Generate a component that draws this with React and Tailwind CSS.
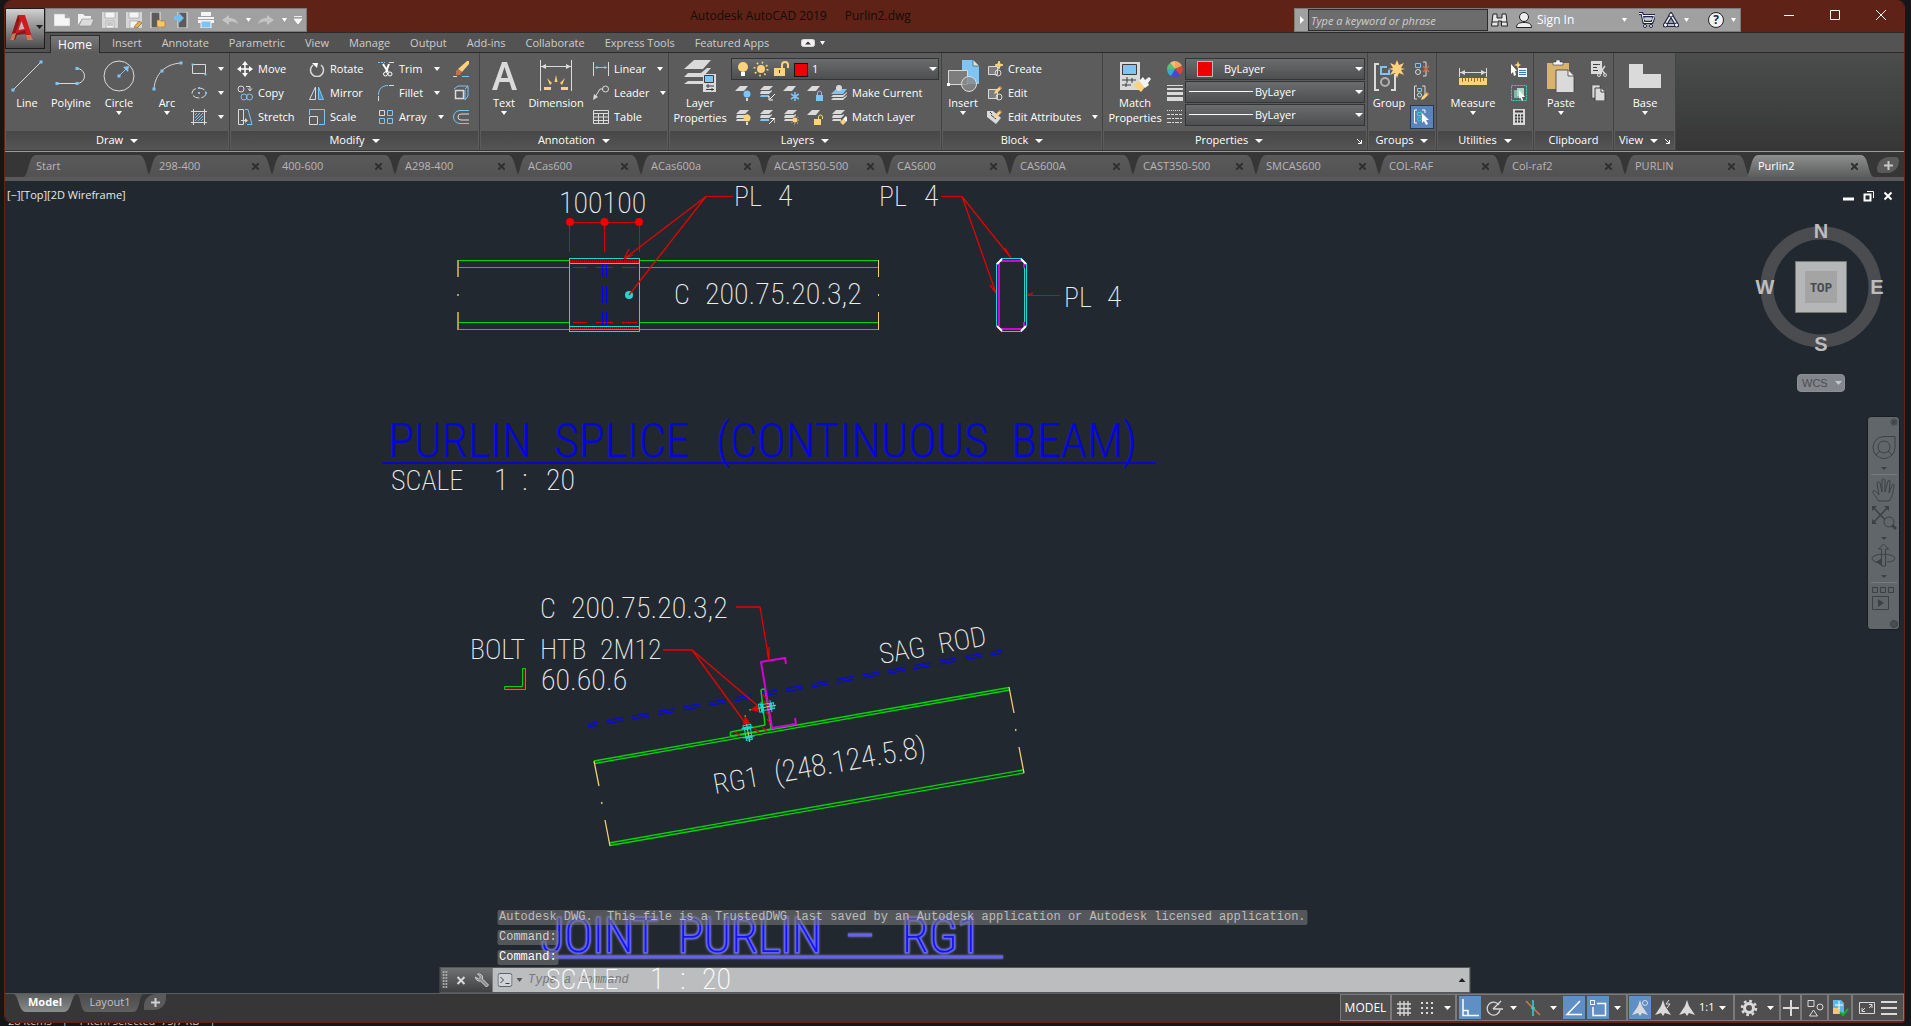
import React from 'react'

const G = '#dadada'
const B = '#7ec4f4'
const Y = '#fcd27a'
const D = '#3c3c3c'

const Svg = ({ w = 16, h, children, className = '' }) => (
  <svg
    width={w}
    height={h || w}
    viewBox={`0 0 ${w} ${h || w}`}
    fill="none"
    stroke={G}
    className={`shrink-0 ${className}`}
    aria-hidden="true"
  >
    {children}
  </svg>
)

const Caret = ({ w = 7, color = '#ffffff', className = '' }) => (
  <svg width={w} height="4" viewBox="0 0 8 4" preserveAspectRatio="none" className={`shrink-0 ${className}`} aria-hidden="true">
    <path d="M0 0h8l-4 4z" fill={color} />
  </svg>
)

const Dots = ({ pts, s = 3, fill = B }) =>
  pts.map(([x, y]) => <rect key={`${x}-${y}`} x={x - s / 2} y={y - s / 2} width={s} height={s} fill={fill} stroke="none" />)

/* ---------- Quick access icons ---------- */
const quickIcons = [
  { name: 'New', icon: <path d="M0 2h11l5 4v8H0zM11 2v4h5" fill="#f6f6f6" stroke="#b8b8b8" strokeWidth=".6" /> },
  {
    name: 'Open',
    icon: (
      <>
        <path d="M0 13V2h5l2 2h6v3H4z" fill="#f2f2f2" stroke="none" />
        <path d="M4 7h12l-3 7H1z" fill="#dcdcdc" stroke="#8a8a8a" strokeWidth=".6" />
      </>
    ),
  },
  {
    name: 'Save',
    icon: (
      <>
        <path d="M0 0h16v16H0z" fill="#d6d6d6" stroke="none" />
        <path d="M3 0h10v6H3zM4 9h8v7H4z" fill="#f4f4f4" stroke="#999" strokeWidth=".6" />
        <path d="M5 11h6M5 13h6" stroke="#999" />
      </>
    ),
  },
  {
    name: 'Save As',
    icon: (
      <>
        <path d="M0 0h16v16H0z" fill="#d6d6d6" stroke="none" />
        <path d="M3 0h10v6H3zM4 9h8v7H4z" fill="#f4f4f4" stroke="#999" strokeWidth=".6" />
        <path d="M8 15l5-6 3 2-5 5z" fill="#e8b24a" stroke="#7a5520" strokeWidth=".6" />
      </>
    ),
  },
  {
    name: 'Open from Web',
    icon: (
      <>
        <path d="M1 0h9v16H1z" fill="#5b5b5b" stroke="#e8e8e8" />
        <path d="M7 15V8h3l1 1h4v6z" fill="#f5c766" stroke="#9a7430" strokeWidth=".6" />
      </>
    ),
  },
  {
    name: 'Save to Web',
    icon: (
      <>
        <path d="M4 0h9v16H4z" fill="#5b5b5b" stroke="#e8e8e8" />
        <path d="M0 4h5V1l5 5-5 5V8H0z" fill="#6fc0f5" stroke="none" />
      </>
    ),
  },
  {
    name: 'Plot',
    icon: (
      <>
        <path d="M3 0h10v4H3zM0 5h16v6H0z" fill="#f4f4f4" stroke="none" />
        <path d="M3 9h10v7H3z" fill="#7ec4f4" stroke="#f4f4f4" />
        <path d="M0 7.500h16" stroke="#a0a0a0" />
      </>
    ),
  },
]

/* ---------- Ribbon icons ---------- */
const bigIcons = {
  line: (
    <Svg w={32}>
      <path d="M2 30L30 2" />
      <Dots pts={[[2, 30], [30, 2]]} />
    </Svg>
  ),
  polyline: (
    <Svg w={32}>
      <path d="M2 23.500H22a7.500 7.500 0 0 0 0-15" />
      <Dots pts={[[2, 23.5], [22, 23.5], [22, 8.5]]} />
    </Svg>
  ),
  circle: (
    <Svg w={32}>
      <circle cx="16" cy="16" r="15" />
      <path d="M16 16l7-7" stroke={B} />
      <path d="M20 7l6-1-1 6z" fill={B} stroke="none" />
      <Dots pts={[[16, 16]]} />
    </Svg>
  ),
  arc: (
    <Svg w={32}>
      <path d="M3 29C4 14 14 4 30 3" />
      <Dots pts={[[3, 29], [11, 11], [30, 3]]} />
    </Svg>
  ),
  text: (
    <Svg w={32}>
      <path fillRule="evenodd" d="M4 30L14 2h5l10 28h-5l-2.500-8h-10L9 30zM13 18h7L16.500 7z" fill={G} stroke="none" />
    </Svg>
  ),
  dimension: (
    <Svg w={32}>
      <path d="M.5 0v31M31.500 0v31M1 6.500h30" />
      <path d="M1 6.500l5-2.500v5zM31 6.500l-5-2.500v5z" fill={G} stroke="none" />
      <path d="M16 15l1.500 7h-3zM7 18l5 5-2 2zM25 18l-5 5 2 2zM4 27h7v3H4zM21 27h7v3h-7z" fill={Y} stroke="none" />
    </Svg>
  ),
  layers: (
    <Svg w={32}>
      <path d="M10 0h17l-8 9H0zM4 13l-4 4h19l8-9h-4l-6 5zM4 21l-4 3h19v-3z" fill={G} stroke="none" />
      <path d="M19 14h13v18H19z" fill={G} stroke="none" />
      <path d="M20.500 15.500h9v7h-9z" fill={B} stroke={D} />
      <path d="M22 26h8M22 29.500h8M24 24v4M28 28v3" stroke={D} />
    </Svg>
  ),
  insert: (
    <Svg w={32}>
      <path d="M15 0h11l6 6v18H15z" fill={B} stroke="none" />
      <path d="M26 0v6h6" fill="#cfeadb" stroke={D} strokeWidth=".6" />
      <path d="M1.500 10.500h19v14h-19z" fill="#7d7d7d" />
      <circle cx="22" cy="24" r="7.500" fill="#8a8a8a" fillOpacity=".8" />
      <Dots pts={[[1.5, 24.5]]} fill="#ffffff" />
    </Svg>
  ),
  match: (
    <Svg w={32}>
      <path d="M1 2h20v28H1z" fill={G} stroke="none" />
      <path d="M3.500 4.500h14v10h-14z" fill={B} stroke={D} />
      <path d="M3 20h14M3 25h9M8 17v6M13 18v5M7 23v4" stroke={D} />
      <path d="M14 25l6-4 6 6-4 5z" fill={Y} stroke="none" />
      <path d="M20 21l4-4 2 3 4-3 2 2-3 4 1 2-4 3z" fill="#f3f3f3" stroke="none" />
    </Svg>
  ),
  group: (
    <Svg w={32}>
      <path d="M6 4H2v26h4M18 30h4V14" strokeWidth="2" />
      <path d="M14 7H8v7h8v-4" stroke={B} strokeWidth="2" />
      <circle cx="12" cy="22" r="4" strokeWidth="2" stroke="#b0b0b0" />
      <path d="M24 0l2 5 5-2-3 5 4 1-4 1 3 5-5-2-2 5-2-5-5 2 3-5-5-1 5-1-3-5 5 2z" fill={Y} stroke="none" />
    </Svg>
  ),
  measure: (
    <Svg w={32}>
      <path d="M2.500 8v9M29.500 8v9M3 12.500h26" />
      <path d="M3 12.500l5-2.500v5zM29 12.500l-5-2.500v5z" fill={G} stroke="none" />
      <path d="M2 18h28v7H2z" fill={Y} stroke="none" />
      <path d="M5.500 18v4M8.500 18v3M11.500 18v4M14.500 18v3M17.500 18v4M20.500 18v3M23.500 18v4M26.500 18v3" stroke="#9c6f20" />
    </Svg>
  ),
  paste: (
    <Svg w={32}>
      <path d="M2 3h22v26H2z" fill="#d9b26c" stroke="none" />
      <path d="M8 5V2h3V0h4v2h3v3z" fill="#f5f5f5" stroke={D} strokeWidth=".6" />
      <path d="M11 10h12l6 6v17H11z" fill={G} stroke={D} strokeWidth=".8" />
      <path d="M23 10v6h6" fill="#f5f5f5" stroke={D} strokeWidth=".8" />
    </Svg>
  ),
  base: (
    <Svg w={32}>
      <path d="M0 4h14v10h18v14H0z" fill={G} stroke="none" />
    </Svg>
  ),
}

const Pencil = ({ x = 0, y = 0 }) => (
  <g transform={`translate(${x} ${y})`} stroke="none">
    <path d="M0 8l1-3 5-5 2 2-5 5z" fill={Y} />
    <path d="M5 1l1-1 2 2-1 1z" fill="#c4704a" />
  </g>
)

const Sheets = ({ blue }) => (
  <g stroke="none" fill={G}>
    <path d="M5 1h9l-4 4H1z" />
    <path d="M2 6h9l2-1v1l-3 3H1z" />
    <path d="M2 10h8v2H1z" fill={blue ? B : G} />
  </g>
)

const Sheet = () => <path d="M5 1h8L9 6H0z" fill={G} stroke="none" />

const smallIcons = {
  rect: (
    <Svg>
      <path d="M1.500 3.500h13v9h-13z" />
      <Dots pts={[[1.5, 3.5], [14.5, 13.5]]} s={2} />
    </Svg>
  ),
  ellipse: (
    <Svg>
      <ellipse cx="8" cy="8" rx="7" ry="5" strokeDasharray="7 2" />
      <Dots pts={[[8, 8], [8, 3], [15, 8]]} s={2} />
    </Svg>
  ),
  hatch: (
    <Svg>
      <path d="M0 2.500h16M0 13.500h16M2.500 0v16M13.500 0v16" />
      <path d="M4 9l5-5M4 12l8-8M7 12l5-5M10 12l2-2M4 6l2-2" stroke={B} />
    </Svg>
  ),
  move: (
    <Svg>
      <path d="M8 2v12M2 8h12" stroke="#fff" strokeWidth="1.500" />
      <path d="M8 0l3 4H5zM8 16l3-4H5zM0 8l4-3v6zM16 8l-4-3v6z" fill="#fff" stroke="none" />
    </Svg>
  ),
  copy: (
    <Svg>
      <circle cx="4" cy="4" r="3" />
      <path d="M9 1.500h4V5M11 3.500l2 2.500 2-2.500" />
      <circle cx="7" cy="12" r="3" stroke={B} />
      <circle cx="12.500" cy="12" r="3" stroke={B} />
    </Svg>
  ),
  stretch: (
    <Svg>
      <path d="M1.500.5h5v15h-5zM4 11.500h5" />
      <path d="M8 9l3 2.500L8 14z" fill={G} stroke="none" />
      <path d="M8 .5h3l4 15h-5" stroke={B} />
    </Svg>
  ),
  rotate: (
    <Svg>
      <path d="M4 4a6.500 6.500 0 1 0 8 0" strokeWidth="1.500" />
      <path d="M3 2h6L8 7z" fill="#fff" stroke="none" />
    </Svg>
  ),
  mirror: (
    <Svg>
      <path d="M6.500 2v12.500h-6z" />
      <path d="M9.500 2v12.500h5z" fill="#4a8dc0" stroke={B} />
    </Svg>
  ),
  scale: (
    <Svg>
      <path d="M.5 6V.5h15v15H10" stroke={B} />
      <path d="M.5 7.500h8v8h-8z" />
    </Svg>
  ),
  trim: (
    <Svg>
      <path d="M0 1.500h7" stroke={B} strokeDasharray="2 1" />
      <path d="M11 1.500h5" />
      <path d="M5 3l5 8M11 3l-3 8" stroke="#fff" strokeWidth="2" />
      <circle cx="7.500" cy="13" r="2" stroke="#fff" />
      <circle cx="12" cy="13" r="2" stroke="#fff" />
    </Svg>
  ),
  fillet: (
    <Svg>
      <path d="M.5 10C.5 4 4 .5 10 .5" stroke={B} />
      <path d="M11 .5h5M.5 11v5" />
    </Svg>
  ),
  array: (
    <Svg>
      <path d="M1.500 1.500h5v5h-5z" />
      <path d="M9.500 1.500h5v5h-5zM1.500 9.500h5v5h-5zM9.500 9.500h5v5h-5z" stroke={B} />
    </Svg>
  ),
  erase: (
    <Svg>
      <path d="M5 8l9-8h2v3l-7 8z" fill={Y} stroke="none" />
      <path d="M3 10l2-2 4 3-2 3H3z" fill="#c4704a" stroke="none" />
      <path d="M0 15.500h4" />
      <path d="M9 15.500h7" stroke={B} />
    </Svg>
  ),
  explode: (
    <Svg>
      <path d="M2.500 5.500h8v8h-8z" strokeWidth="1.500" />
      <path d="M1 4l4-3h10l-3 3M15 1v10l-3 4V5" stroke={B} />
    </Svg>
  ),
  offset: (
    <Svg>
      <path d="M16 1.500H7a6.500 6.500 0 0 0 0 13h9" stroke={B} />
      <path d="M16 5H8a3 3 0 0 0 0 6h8" />
    </Svg>
  ),
  linear: (
    <Svg>
      <path d="M.5 1v14M15.500 1v14" />
      <path d="M2 6.500h12M4 5v3M12 5v3" stroke={B} />
    </Svg>
  ),
  leader: (
    <Svg>
      <circle cx="12.500" cy="4" r="3" />
      <path d="M10 4H7l-5 8" />
      <path d="M0 15l1-6 4 3z" fill={G} stroke="none" />
    </Svg>
  ),
  table: (
    <Svg>
      <path d="M.5 1.500h15v13H.5zM.5 4.500h15M.5 8h15M.5 11.500h15M5.500 4v10M10.500 4v10" />
    </Svg>
  ),
  layerOff: <Svg><Sheet /><circle cx="12" cy="9" r="3.500" fill={B} stroke="none" /><path d="M12 13v3" strokeWidth="2" /></Svg>,
  layerIso: <Svg><Sheets blue /><path d="M16 9l-5 5M10 11v4h4" stroke="#fff" /></Svg>,
  layerFreeze: <Svg><Sheet /><path d="M12 7v9M8 9l8 5M16 9l-8 5" stroke={B} strokeWidth="1.500" /></Svg>,
  layerLock: <Svg><Sheet /><path d="M9 10h7v6H9z" fill={B} stroke="none" /><path d="M10.500 10V8a2 2 0 0 1 4 0v2" stroke={B} /></Svg>,
  makeCurrent: (
    <Svg>
      <path d="M5 4h11l-4 5H0z" fill={B} stroke="none" />
      <path d="M2 10h10l4-3v1l-4 4H0zM2 13h10l4-3v1l-4 4H0z" fill={G} stroke="none" />
      <circle cx="8" cy="3" r="3" fill={G} stroke="none" />
    </Svg>
  ),
  layerOn: <Svg><Sheets /><circle cx="12" cy="9" r="3.500" fill={Y} stroke="none" /><path d="M12 13v3" strokeWidth="2" /></Svg>,
  layerUniso: <Svg><Sheets blue /><path d="M10 15l5-5M11.500 9.500H16V14" stroke="#fff" /></Svg>,
  layerThaw: <Svg><Sheets /><circle cx="12" cy="11" r="2.500" fill={Y} stroke="none" /><circle cx="12" cy="11" r="4" stroke={Y} strokeDasharray="1 2" /></Svg>,
  layerUnlock: <Svg><Sheet /><path d="M7 10h7v6H7z" fill={Y} stroke="none" /><path d="M11.500 10V8a2 2 0 0 1 4 0v2" stroke={Y} /></Svg>,
  matchLayer: <Svg><Sheets /><path d="M9 13l3-3 3 3-3 3z" fill={Y} stroke="none" /><path d="M12 10l3-3 2 3-2 3z" fill="#fff" stroke="none" /></Svg>,
  create: (
    <Svg>
      <path d="M1.500 5.500h9v8h-9z" fill="#7d7d7d" />
      <circle cx="11" cy="12" r="3" />
      <path d="M12 0l1 3 3 1-3 1-1 3-1-3-3-1 3-1z" fill={Y} stroke={Y} />
    </Svg>
  ),
  edit: (
    <Svg>
      <path d="M1.500 4.500h9v9h-9z" fill="#7d7d7d" />
      <circle cx="12" cy="12" r="3" />
      <Pencil x={7} y={1} />
    </Svg>
  ),
  attributes: (
    <Svg>
      <path d="M0 2h6l8 7-5 6-9-7z" fill={G} stroke="none" />
      <path d="M4 6l5 4M3 3l2 2" stroke={D} />
      <Pencil x={7} y={1} />
    </Svg>
  ),
  wheel: (
    <Svg>
      <path d="M8 8L3 2a8 8 0 0 1 5-2z" fill="#f0c070" stroke="none" />
      <path d="M8 8V0a8 8 0 0 1 7 5z" fill="#e8a860" stroke="none" />
      <path d="M8 8l7-3a8 8 0 0 1-2 9z" fill="#d84838" stroke="none" />
      <path d="M8 8l5 6a8 8 0 0 1-9 1z" fill="#4848d8" stroke="none" />
      <path d="M8 8l-4 7a8 8 0 0 1-4-7z" fill="#38a8d8" stroke="none" />
      <path d="M8 8H0a8 8 0 0 1 3-6z" fill="#58c070" stroke="none" />
    </Svg>
  ),
  weight: (
    <Svg>
      <path d="M0 .5h16" />
      <path d="M0 4h16" strokeWidth="2" />
      <path d="M0 8.500h16" strokeWidth="3" />
      <path d="M0 14h16" strokeWidth="4" />
    </Svg>
  ),
  linetype: (
    <Svg>
      <path d="M0 1.500h16" strokeDasharray="1 1" />
      <path d="M0 5.500h16" strokeDasharray="3 1" />
      <path d="M0 9.500h16M0 13.500h16" strokeDasharray="4 1 2 1" />
    </Svg>
  ),
  ungroup: (
    <Svg>
      <path d="M1.500 2.500h5v4h-5z" stroke={B} />
      <circle cx="4" cy="11" r="2.500" />
      <path d="M9 1h3v14H9" />
      <path d="M9 5l6 6M15 5l-6 6" stroke="#d06a48" strokeWidth="1.500" />
    </Svg>
  ),
  groupEdit: (
    <Svg>
      <path d="M3 1H.5v13H3M8 1h3v9" />
      <path d="M3.500 3.500h4v3h-4z" stroke={B} />
      <circle cx="5.500" cy="10" r="2" />
      <Pencil x={7} y={7} />
    </Svg>
  ),
  groupSelect: (
    <Svg>
      <path d="M3 1H.5v13H3M8 1h3v3" stroke="#fff" />
      <path d="M3.500 3.500h4v3h-4z" stroke="#28d8c0" />
      <circle cx="5.500" cy="10" r="2" stroke="#28d8c0" />
      <path d="M8 4l7 7h-3l2 4-2 1-2-4-2 2z" fill="#fff" stroke="none" />
    </Svg>
  ),
  quickSelect: (
    <Svg>
      <path d="M0 3l6 7H4l1 4-2 1-1-4-2 2z" fill="#fff" stroke="none" />
      <path d="M7 0l1 3 2 1-2 1-1 3-1-3-3-1 3-1z" fill={Y} stroke="none" />
      <path d="M7 7h9v9H7z" fill="#f0f4fa" stroke="none" />
      <path d="M8 9.500h7M8 11.500h7M8 13.500h7" stroke="#3b78b8" />
    </Svg>
  ),
  selectAll: (
    <Svg>
      <path d="M.5.5h15v15H.5z" stroke="#2fd8c8" strokeDasharray="2 1" />
      <path d="M3 5h8v8H3z" fill="#79b8a8" stroke="none" />
      <path d="M6 3h7v8H6z" fill="#a8d8c8" stroke="none" />
      <path d="M8 5l6 7h-3l1 3-1 1-2-4-1 2z" fill="#fff" stroke="none" />
    </Svg>
  ),
  calc: (
    <Svg>
      <path d="M2 0h12v16H2z" fill={G} stroke="none" />
      <path d="M4 2.500h8" stroke={D} strokeWidth="2" />
      <path d="M4 6.500h8M4 9.500h8M4 12.500h8" stroke={D} strokeWidth="2" strokeDasharray="2 1" />
    </Svg>
  ),
  cut: (
    <Svg>
      <path d="M0 0h11v13H0z" fill={G} stroke="none" />
      <path d="M2 3.500h7M2 6.500h4M2 9.500h5" stroke={D} />
      <path d="M7 4l7 9M14 5l-6 8" strokeWidth="1.500" />
      <circle cx="8" cy="14" r="1.500" />
      <circle cx="14" cy="14" r="1.500" />
    </Svg>
  ),
  clip: (
    <Svg>
      <path d="M1 0h8v13H1z" fill={G} stroke={D} strokeWidth=".6" />
      <path d="M4 3h6l4 4v9H4z" fill={G} stroke={D} />
      <path d="M10 3v4h4" fill="#f5f5f5" stroke={D} />
    </Svg>
  ),
}

/* ---------- Ribbon pieces ---------- */
const Big = ({ icon, label, className, caret }) => (
  <button className={`flex shrink-0 flex-col items-center pt-[3px] ${className}`}>
    {bigIcons[icon]}
    <span className="mt-[3px] text-center text-[11px] leading-[15px]">{label}</span>
    {caret && <Caret w={6} className="mt-[1px]" />}
  </button>
)

const Small = ({ icon, label, caret, title }) => (
  <button className="flex h-6 shrink-0 items-center gap-[5px] text-[11px] whitespace-nowrap" aria-label={label || title || icon}>
    {smallIcons[icon]}
    {label && <span>{label}</span>}
    {caret && <Caret w={6} className="ml-[6px]" />}
  </button>
)

const Panel = ({ title, caret = true, launcher, className, children }) => (
  <section className={`flex shrink-0 flex-col border-r border-[#434343] bg-[#5c5c5c] ${className}`}>
    <div className="flex h-[78px] items-start pt-1">{children}</div>
    <div
      className={`relative mx-px flex h-[19px] items-center justify-center gap-[7px] bg-linear-to-b from-[#474747] to-[#555555] text-[11px] ${launcher ? 'pr-3' : ''}`}
    >
      {title}
      {caret && <Caret w={8} />}
      {launcher && (
        <Svg w={5} className="absolute top-2 right-1">
          <path d="M0 0l4 4M4.500 1v3.500H1" stroke="#fff" />
        </Svg>
      )}
    </div>
  </section>
)

const Drop = ({ label, value, className, children }) => (
  <div className="relative h-[22px] w-full text-[11px]">
    <select
      aria-label={label}
      className={`h-full w-full appearance-none border border-[#303536] bg-linear-to-b from-[#6a6c6d] to-[#4d4f50] text-white outline-none ${className}`}
    >
      <option>{value}</option>
    </select>
    {children}
    <Caret w={8} className="absolute top-[9px] right-[2px]" />
  </div>
)

const Ribbon = () => (
  <div className="flex h-[99px] shrink-0 items-start border-b border-[#9a9a9a] bg-linear-to-b from-[#4b4d4d] to-[#363636] text-white">
    <Panel title="Draw" className="w-[225px]">
      <Big icon="line" label="Line" className="w-[44px]" />
      <Big icon="polyline" label="Polyline" className="w-[44px]" />
      <Big icon="circle" label="Circle" className="w-[52px]" caret />
      <Big icon="arc" label="Arc" className="w-[44px]" caret />
      <div className="ml-[2px] flex flex-col">
        <Small icon="rect" title="Rectangle" caret />
        <Small icon="ellipse" title="Ellipse" caret />
        <Small icon="hatch" title="Hatch" caret />
      </div>
    </Panel>
    <Panel title="Modify" className="w-[250px]">
      <div className="grid grid-cols-[72px_69px_75px_16px] pl-[7px]">
        <Small icon="move" label="Move" />
        <Small icon="rotate" label="Rotate" />
        <Small icon="trim" label="Trim" caret />
        <Small icon="erase" title="Erase" />
        <Small icon="copy" label="Copy" />
        <Small icon="mirror" label="Mirror" />
        <Small icon="fillet" label="Fillet" caret />
        <Small icon="explode" title="Explode" />
        <Small icon="stretch" label="Stretch" />
        <Small icon="scale" label="Scale" />
        <Small icon="array" label="Array" caret />
        <Small icon="offset" title="Offset" />
      </div>
    </Panel>
    <Panel title="Annotation" className="w-[189px]">
      <Big icon="text" label="Text" className="w-[48px]" caret />
      <Big icon="dimension" label="Dimension" className="w-[56px]" />
      <div className="ml-[9px] flex flex-col">
        <Small icon="linear" label="Linear" caret />
        <Small icon="leader" label="Leader" caret />
        <Small icon="table" label="Table" />
      </div>
    </Panel>
    <Panel title="Layers" className="w-[273px]">
      <Big icon="layers" label={<>Layer<br />Properties</>} className="w-[62px]" />
      <div className="flex w-[208px] flex-col pt-px">
        <Drop label="Layer" value="1" className="pl-[80px]">
          <Svg w={72} h={16} className="pointer-events-none absolute top-[3px] left-[6px]">
            <circle cx="6" cy="6" r="5" fill={Y} stroke="none" />
            <path d="M4 11h4v4H4z" fill="#fff" stroke="none" />
            <circle cx="24" cy="8" r="4" fill={Y} stroke="none" />
            <circle cx="24" cy="8" r="6.500" stroke={Y} strokeDasharray="1.500 3.600" strokeWidth="2" />
            <path d="M37 7h11v8H37z" fill={Y} stroke="none" />
            <path d="M45 7V4a3 3 0 0 1 6 0v3" stroke={Y} strokeWidth="2" />
            <path d="M42 9h1v3h-1z" fill={D} stroke="none" />
            <rect x="57.500" y="2.500" width="13" height="13" fill="#ee0000" stroke="#151515" />
          </Svg>
        </Drop>
        <div className="ml-1 grid grid-cols-[24px_24px_24px_24px_auto] pt-px">
          <Small icon="layerOff" />
          <Small icon="layerIso" />
          <Small icon="layerFreeze" />
          <Small icon="layerLock" />
          <Small icon="makeCurrent" label="Make Current" />
          <Small icon="layerOn" />
          <Small icon="layerUniso" />
          <Small icon="layerThaw" />
          <Small icon="layerUnlock" />
          <Small icon="matchLayer" label="Match Layer" />
        </div>
      </div>
    </Panel>
    <Panel title="Block" className="w-[161px]">
      <Big icon="insert" label="Insert" className="w-[42px]" caret />
      <div className="ml-[3px] flex flex-col">
        <Small icon="create" label="Create" />
        <Small icon="edit" label="Edit" />
        <Small icon="attributes" label="Edit Attributes" caret />
      </div>
    </Panel>
    <Panel title="Properties" className="w-[265px]" launcher>
      <Big icon="match" label={<>Match<br />Properties</>} className="w-[64px]" />
      <div className="flex flex-col">
        <Small icon="wheel" title="Object color" />
        <Small icon="weight" title="Lineweight" />
        <Small icon="linetype" title="Linetype" />
      </div>
      <div className="ml-[2px] flex w-[180px] flex-col gap-px pt-px">
        <Drop label="Object color" value="ByLayer" className="pl-[38px]">
          <span className="pointer-events-none absolute top-[3px] left-[12px] h-4 w-4 border border-[#b8b8b8] bg-[#ee0000]" />
        </Drop>
        <Drop label="Lineweight" value="ByLayer" className="pl-[69px]">
          <span className="pointer-events-none absolute top-[10px] left-1 h-px w-16 bg-white" />
        </Drop>
        <Drop label="Linetype" value="ByLayer" className="pl-[69px]">
          <span className="pointer-events-none absolute top-[10px] left-1 h-px w-16 bg-white" />
        </Drop>
      </div>
    </Panel>
    <Panel title="Groups" className="w-[69px]">
      <Big icon="group" label="Group" className="w-[42px]" />
      <div className="flex flex-col">
        <div className="pl-[4px]"><Small icon="ungroup" title="Ungroup" /></div>
        <div className="pl-[4px]"><Small icon="groupEdit" title="Group edit" /></div>
        <div className="border border-[#26384f] bg-[#5b84bd] px-[3px]"><div className="-my-px"><Small icon="groupSelect" title="Group selection" /></div></div>
      </div>
    </Panel>
    <Panel title="Utilities" className="w-[97px]">
      <Big icon="measure" label="Measure" className="w-[72px]" caret />
      <div className="ml-[2px] flex flex-col">
        <Small icon="quickSelect" title="Quick select" />
        <Small icon="selectAll" title="Select all" />
        <Small icon="calc" title="Calculator" />
      </div>
    </Panel>
    <Panel title="Clipboard" caret={false} className="w-[80px]">
      <Big icon="paste" label="Paste" className="w-[54px]" caret />
      <div className="ml-[3px] flex flex-col">
        <Small icon="cut" title="Cut" />
        <Small icon="clip" title="Copy clip" />
      </div>
    </Panel>
    <Panel title="View" className="w-[62px]" launcher>
      <Big icon="base" label="Base" className="w-[62px]" caret />
    </Panel>
  </div>
)

/* ---------- Title bar ---------- */
const TitleBar = () => (
  <header className="relative flex h-8 shrink-0 items-start bg-[#5f2216]">
    <button
      aria-label="Application menu"
      className="absolute top-2 left-0 z-10 flex h-[41px] w-[40px] items-center gap-[2px] border border-[#1c1c1c] bg-linear-to-b from-[#d2d2d2] to-[#4c4c4c] pb-1 pl-[3px]"
    >
      <Svg w={25} h={28}>
        <path d="M1 27L9 2h7l8 25h-6l-2-7-8 1-2 6z" fill="#cf1b1f" stroke="none" />
        <path d="M1 27L9 2l2 5-5 14 10-4 1 4-9 1-2 5z" fill="#8a1a1a" stroke="none" />
        <path d="M9.500 17L12.500 8l3 8z" fill="#b9b9b9" stroke="none" />
        <path d="M1 27l2-6 4-1-2 7zM17 22l5 0 2 5h-6z" fill="#c97858" stroke="none" />
      </Svg>
      <Caret w={7} color="#222222" />
    </button>
    <div className="mt-2 ml-[40px] flex h-6 shrink-0 items-center border border-[#7c7c7c] bg-[#a0a0a0] pl-1">
      {quickIcons.map((q) => (
        <button key={q.name} aria-label={q.name} className="flex w-6 justify-center">
          <Svg>{q.icon}</Svg>
        </button>
      ))}
      <button aria-label="Undo" className="flex w-6 justify-center">
        <Svg><path d="M0 8l7-5v3c5 0 8 2 9 6-3-2-5-3-9-2v3z" fill="#c4c4c4" stroke="none" /></Svg>
      </button>
      <button aria-label="Undo list" className="flex w-3 justify-center"><Caret w={5} /></button>
      <button aria-label="Redo" className="flex w-6 justify-center">
        <Svg><path d="M16 8L9 3v3c-5 0-8 2-9 6 3-2 5-3 9-2v3z" fill="#c4c4c4" stroke="none" /></Svg>
      </button>
      <button aria-label="Redo list" className="flex w-3 justify-center"><Caret w={5} /></button>
      <button aria-label="Customize" className="flex w-4 justify-center">
        <Svg w={8}><path d="M0 .5h8M0 3h8l-4 5z" fill="#fff" stroke="#fff" strokeWidth=".8" /></Svg>
      </button>
    </div>
    <h1 className="flex h-8 flex-1 items-center justify-center gap-[18px] text-[12px] text-[#140c0a]">
      <span>Autodesk AutoCAD 2019</span>
      <span>Purlin2.dwg</span>
    </h1>
    <div className="mt-2 flex h-6 w-[447px] shrink-0 items-center border border-[#7c7c7c] bg-[#a0a0a0] text-[12px] text-white">
      <button aria-label="Search options" className="flex w-[13px] justify-center">
        <Svg w={4} h={8}><path d="M0 0l4 4-4 4z" fill="#fff" stroke="none" /></Svg>
      </button>
      <input
        aria-label="Search"
        placeholder="Type a keyword or phrase"
        className="h-full w-[180px] border border-[#2c2c2c] bg-[#6c6c6c] px-[2px] text-[11px] italic outline-none placeholder:text-[#cfcfcf]"
      />
      <button aria-label="Find" className="ml-[3px]">
        <Svg w={17} h={16}>
          <path d="M2 2h4v4h5V2h4l1.500 12h-6V9H7v5H.5z" fill="#e8e8e8" stroke="#222" />
          <path d="M1 10h5M11 10h5" stroke="#222" />
        </Svg>
      </button>
      <button className="ml-2 flex items-center gap-[5px]">
        <Svg>
          <circle cx="8" cy="5" r="4.500" fill="#eee" stroke="#222" />
          <path d="M.5 15.500c0-4 3-5 7.500-5s7.500 1 7.500 5z" fill="#eee" stroke="#222" />
        </Svg>
        Sign In
      </button>
      <Caret w={5} className="ml-[48px]" />
      <button aria-label="App Store" className="ml-3">
        <Svg>
          <path d="M0 1.500h3l2 9h8l2.500-7H4" stroke="#1f2547" strokeWidth="3" />
          <path d="M0 1.500h3l2 9h8l2.500-7H4M5 7h9" stroke="#f4f4f4" />
          <circle cx="6" cy="14" r="1.500" fill="#fff" stroke="#1f2547" />
          <circle cx="12" cy="14" r="1.500" fill="#fff" stroke="#1f2547" />
        </Svg>
      </button>
      <button aria-label="Stay connected" className="ml-2 flex items-center gap-[5px]">
        <Svg>
          <path d="M8 3L2 13h12z" stroke="#1f2547" strokeWidth="4" />
          <path d="M8 3L2 13h12z" stroke="#f4f4f4" strokeWidth="1.500" />
          <circle cx="8" cy="3" r="2" fill="#fff" stroke="#1f2547" />
          <circle cx="2.500" cy="13" r="2" fill="#fff" stroke="#1f2547" />
          <circle cx="13.500" cy="13" r="2" fill="#fff" stroke="#1f2547" />
        </Svg>
        <Caret w={5} />
      </button>
      <button aria-label="Help" className="ml-auto flex items-center gap-[7px] pr-1">
        <span className="flex h-4 w-4 items-center justify-center rounded-full border border-[#222] bg-[#f2f2f2] text-[12px] leading-none font-bold text-[#1f2547]">?</span>
        <Caret w={5} />
      </button>
    </div>
    <div className="ml-[25px] flex h-[30px] shrink-0">
      <button aria-label="Minimize" className="flex w-[46px] items-center justify-center">
        <Svg w={10}><path d="M0 5.500h10" stroke="#fff" /></Svg>
      </button>
      <button aria-label="Maximize" className="flex w-[46px] items-center justify-center">
        <Svg w={10}><path d="M.5.5h9v9h-9z" stroke="#fff" /></Svg>
      </button>
      <button aria-label="Close" className="flex w-[46px] items-center justify-center">
        <Svg w={10}><path d="M0 0l10 10M10 0L0 10" stroke="#fff" /></Svg>
      </button>
    </div>
  </header>
)

const menus = ['Insert', 'Annotate', 'Parametric', 'View', 'Manage', 'Output', 'Add-ins', 'Collaborate', 'Express Tools', 'Featured Apps']

const MenuTabs = () => (
  <nav className="flex h-[21px] shrink-0 items-end border-y border-[#2b2b2b] bg-[#535353] pl-[45px] text-[11px] text-[#cdcdcd]">
    <button className="-mb-px flex h-[18px] w-[50px] items-center justify-center border border-b-0 border-[#2b2b2b] bg-linear-to-b from-[#777777] to-[#5c5c5c] text-[12px] text-white">
      Home
    </button>
    <div className="flex h-full items-center gap-5 pl-3">
      {menus.map((m) => (
        <button key={m} className="leading-none">{m}</button>
      ))}
    </div>
    <button aria-label="Minimize ribbon" className="ml-8 flex h-full items-center gap-[5px]">
      <Svg w={14} h={8}>
        <rect x=".5" y=".5" width="13" height="7" rx="2" fill="#f2f2f2" />
        <path d="M4 5.500h6L7 2.500z" fill="#333" stroke="none" />
      </Svg>
      <Caret w={5} />
    </button>
  </nav>
)

/* ---------- File tabs ---------- */
const files = ['Start', '298-400', '400-600', 'A298-400', 'ACas600', 'ACas600a', 'ACAST350-500', 'CAS600', 'CAS600A', 'CAST350-500', 'SMCAS600', 'COL-RAF', 'Col-raf2', 'PURLIN', 'Purlin2']

const FileTabs = () => (
  <div className="flex h-[29px] shrink-0 items-end border-b-4 border-[#585a5a] bg-[#363636] pl-[18px] text-[11px]">
    {files.map((f) => {
      const active = f === 'Purlin2'
      return (
        <button
          key={f}
          className={`mr-[-6px] flex h-[22px] w-[129px] shrink-0 items-center justify-between pr-[16px] pl-[13px] [clip-path:path('M0_22C6_22_5_0_13_0H116C124_0_123_22_129_22Z')] ${
            active ? 'bg-linear-to-b from-[#8e9090] to-[#5c5e5e] text-white' : 'bg-linear-to-b from-[#5a5a5a] to-[#525252] text-[#b9b4b8]'
          }`}
        >
          <span>{f}</span>
          {f !== 'Start' && (
            <Svg w={7}>
              <path d="M0 0l7 7M7 0L0 7" stroke="#303030" strokeWidth="2" />
            </Svg>
          )}
        </button>
      )
    })}
    <button
      aria-label="New tab"
      className="mb-1 ml-[9px] flex h-4 w-[22px] items-center justify-center rounded-tl-xl rounded-tr-sm rounded-br-xl rounded-bl-sm bg-[#5a5a5a]"
    >
      <Svg w={9}><path d="M4.500 0v9M0 4.500h9" stroke="#c8c8c8" strokeWidth="2" /></Svg>
    </button>
  </div>
)

/* ---------- Model space ---------- */
const labels = [
  [734, 206, 'PL'],
  [879, 206, 'PL'],
  [674, 304, 'C'],
  [1064, 307, 'PL'],
  [391, 490, 'SCALE'],
  [540, 618, 'C'],
  [470, 659, 'BOLT'],
  [540, 659, 'HTB'],
  [600, 659, '2M12'],
]

const numbers = [
  [559, 213, '100100'],
  [778, 206, '4'],
  [924, 206, '4'],
  [705, 304, '200.75.20.3,2'],
  [1107, 307, '4'],
  [494, 490, '1'],
  [522, 490, ':'],
  [546, 490, '20'],
  [571, 618, '200.75.20.3,2'],
  [541, 690, '60.60.6'],
]

const Bolt = ({ x, y, turn }) => (
  <g transform={`translate(${x} ${y}) rotate(${turn})`} fill="none">
    <path d="M-17 0H10" stroke="#e8c860" />
    <path d="M-16 0l8-4v8z" fill="#e00000" stroke="none" />
    <path d="M-7-4h2v8h-2zM-4-6v12M-3-3h7v6h-7zM5-6v12M6-3h2v6H6z" stroke="#18dcd4" />
  </g>
)

const Drawing = () => (
  <svg
    className="absolute top-0 left-0 font-['Roboto_Condensed','Roboto',sans-serif] font-light"
    width="1300"
    height="812"
    viewBox="5 181 1300 812"
    fill="none"
    stroke="none"
  >
    {/* Purlin splice, side view */}
    <g shapeRendering="crispEdges">
      <path d="M458 260.500H570M640 260.500H879M458 267.500H570M640 267.500H879M458 322.500H570M640 322.500H879M458 329.500H879" stroke="#00d800" />
      <path d="M458 260v17M457 295h2M458 312v18" stroke="#b8983c" strokeWidth="2" />
      <path d="M878.500 260v17M878.500 294v2M878.500 312v18" stroke="#f4cf6c" />
      <path d="M570 261.500H640M570 327.500H640" stroke="#c80808" strokeWidth="3" strokeDasharray="1 1" />
      <path d="M569.500 258.500H639.500V331.500H569.500zM569.500 263.500H639.500M569.500 326.500H639.500" stroke="#18dcd4" />
      <path d="M573 267.500h14M596 267.500h17M622 267.500h15M573 322.500h14M596 322.500h17M622 322.500h15" stroke="#d80000" />
      <path d="M602.500 264v13M606.500 264v13M602.500 286v17M606.500 286v17M602.500 312v14M606.500 312v14" stroke="#0000f0" />
      <path d="M570 222H639M569.500 222v30M604.500 222v30M639.500 222v30" stroke="#d80000" />
      <path d="M706 196.500H733M941 196.500H962M1026 295H1060" stroke="#d80000" />
    </g>
    <g fill="#f00000">
      <circle cx="570" cy="222" r="4" />
      <circle cx="604.500" cy="222" r="4" />
      <circle cx="639" cy="222" r="4" />
    </g>
    <circle cx="629" cy="295" r="4" fill="#18dcd4" />
    <path
      d="M706 196.500L624 259l5-10M624 259l9-4M706 196.500L629 295M962 196.500L1011 258l-6-10M962 196.500L996 293l-6-8M1026 295l7-2"
      stroke="#e80000"
      strokeWidth="1.300"
    />

    {/* Splice section */}
    <g shapeRendering="crispEdges">
      <path d="M1001 258.500h21M1001 331.500h21M996.500 263v63M1026.500 263v63M1024.500 268v54" stroke="#18dcd4" />
      <path d="M1001 261h21M1001 329h21M999 263v63M1024 263v5M1024 322v5" stroke="#d800d8" strokeWidth="2" />
    </g>
    <path d="M997 264l5-5M1021 259l5 5M997 326l5 5M1021 331l5-5" stroke="#ffffff" strokeWidth="2" />

    {/* Sag rod and girder */}
    <path d="M588 724L1002 650M588 727L1002 653" stroke="#0808e8" strokeWidth="1.300" strokeDasharray="17 9" strokeDashoffset="7" />
    <path d="M594 761L1009 687.500M595 763.500L1010 690M609 843L1023 770M610 845.500L1024 773" stroke="#00d800" strokeWidth="1.300" />
    <path d="M594 761l5 25M601.500 802l.5 2M605 820l5 26M1009 687l5 26M1015.500 729l.5 2M1019 747l5 26" stroke="#f4cf6c" strokeWidth="1.300" />
    <path d="M761 690.500c0-1 3-2 4-1L771 729 731 736c-1-1-1-3 0-4L765 725z" stroke="#00d800" strokeWidth="1.500" />
    <path d="M762 694l6 6M764 701l4 5M766 712l4 5M767 719l3 4M762 727l5 4M754 728l5 5M735 732l5 4" stroke="#d80000" strokeWidth="1.500" />
    <path d="M786 664l-1-6-24 4 11 66 24-4-1-6" stroke="#d800d8" strokeWidth="2" />
    <Bolt x={766} y={707} turn={-10} />
    <Bolt x={748} y={732} turn={80} />
    <path d="M736 607H760L769 660V647M769 660l-2-8M663 650H692L758 706M692 650L746 724" stroke="#e80000" strokeWidth="1.300" />
    <path d="M522.500 668.500h3v21h-21v-3h18z" fill="#701010" stroke="#00d800" />

    {/* Notes */}
    <g fill="#ececec" fontSize="28" className="font-extralight">
      {labels.map(([x, y, t]) => (
        <text key={`${x}-${y}`} x={x} y={y}>{t}</text>
      ))}
      <g fontSize="30">
        {numbers.map(([x, y, t]) => (
          <text key={`${x}-${y}`} x={x} y={y}>{t}</text>
        ))}
      </g>
      <g transform="translate(881 664) rotate(-10)">
        <text x="0" y="0">SAG</text>
        <text x="60" y="0">ROD</text>
      </g>
      <g transform="translate(715 794) rotate(-10)">
        <text x="0" y="0">RG1</text>
        <text x="62" y="0" fontSize="30">(248.124.5.8)</text>
      </g>
    </g>

    {/* Titles */}
    <g fill="#0505e0" fontSize="48">
      <text x="388" y="457">PURLIN</text>
      <text x="554" y="457">SPLICE</text>
      <text x="716" y="457">(CONTINUOUS</text>
      <text x="1011" y="457">BEAM)</text>
      <path d="M382 463H1156" stroke="#0808c8" strokeWidth="2" />
    </g>
    <g
      fill="#1212ee"
      stroke="#6262f4"
      strokeWidth="3"
      fontSize="48"
      className="font-extralight [filter:drop-shadow(0_0_1px_#8a8a94)] [paint-order:stroke]"
    >
      <text x="541" y="952">JOINT</text>
      <text x="678" y="952">PURLIN</text>
      <path d="M848 935h24" />
      <text x="902" y="952">RG1</text>
      <path d="M542 957h461" />
    </g>
  </svg>
)

const ViewCube = () => (
  <svg width="134" height="134" viewBox="0 0 134 134" className="block" aria-hidden="true">
    <circle cx="67" cy="67" r="54" fill="none" stroke="#4a4c50" strokeWidth="13" />
    <rect x="41.500" y="41.500" width="51" height="51" fill="#b4b6b8" stroke="#75786f" />
    <rect x="51" y="51" width="32" height="32" fill="#a4a4a4" />
    <g fill="#bdbdbd" textAnchor="middle" fontWeight="bold" fontSize="20" fontFamily="'Liberation Sans', sans-serif">
      <text x="67" y="18">N</text>
      <text x="67" y="131">S</text>
      <text x="11" y="74">W</text>
      <text x="123" y="74">E</text>
    </g>
    <text x="67" y="72" textAnchor="middle" fill="#484c52" fontWeight="bold" fontSize="13" fontFamily="'Roboto Condensed', 'Roboto', sans-serif">TOP</text>
  </svg>
)

const NavBar = () => (
  <div className="absolute top-[235px] right-[4px] flex h-[214px] w-[33px] flex-col items-center rounded border border-[#181d22] bg-[#60666a]">
    <Svg w={28} h={212}>
      <g stroke="#3d4144">
        <circle cx="24" cy="5" r="3.500" fill="#4a4f52" stroke="none" />
        <path d="M22.500 3.500l3 3M25.500 3.500l-3 3" />
        <path d="M14 19.500h11v11a11 11 0 1 1-11-11z" />
        <circle cx="14" cy="30" r="6" />
        <path d="M6 38l4-4M22 38l-4-4" />
        <path d="M1 57.500h26M1 165.500h26" stroke="#777c80" />
        <path d="M9 84c-3-4-6-7-6-10 2-1 4 1 6 4l-2-12c1-2 3-1 3 0l2 9V63c1-2 3-1 3 0v12l3-11c1-1 3-1 2 1l-1 11 3-8c1-1 3-1 2 1-1 6-2 12-5 15z" />
        <path d="M3 90l15 16M18 90L3 106" strokeWidth="1.500" />
        <path d="M2 89h5l-5 5zM19 89h-5l5 5zM2 107h5l-5-5z" fill="#3d4144" stroke="none" />
        <circle cx="19" cy="105" r="5" fill="#60666a" />
        <path d="M22 108l4 4" strokeWidth="3" />
        <path d="M11.500 149v-17h-3l5-5 5 5h-3v17z" />
        <path d="M10 146c-6-1-8-3-8-5 1-5 22-5 23 0 0 2-3 4-8 4" />
        <path d="M6 145l6-4v8z" fill="#3d4144" stroke="none" />
        <path d="M2.500 170.500h5v5h-5zM10.500 170.500h5v5h-5zM18.500 170.500h5v5h-5zM2.500 179.500h16v13h-16z" />
        <path d="M8 182v8l6-4z" fill="#3d4144" stroke="none" />
        <path d="M11 50h6l-3 3zM11 120h6l-3 3zM11 158h6l-3 3z" fill="#3d4144" stroke="none" />
        <circle cx="24" cy="207" r="3.500" fill="#4a4f52" />
      </g>
    </Svg>
  </div>
)

const historyLines = [
  { id: 1, text: 'Autodesk DWG.  This file is a TrustedDWG last saved by an Autodesk application or Autodesk licensed application.', color: 'text-[#bdbdbd]' },
  { id: 2, text: 'Command:', color: 'text-[#d2d2d2]' },
  { id: 3, text: 'Command:', color: 'text-white' },
]

const CommandLine = () => (
  <div className="absolute bottom-0 left-1/2 w-[1031px] max-w-full -translate-x-1/2 font-['Liberation_Mono','DejaVu_Sans_Mono',monospace] text-[12px]">
    <div className="mb-[2px] ml-[58px] flex flex-col items-start gap-[5px]">
      {historyLines.map((l) => (
        <p key={l.id} className={`rounded-xs bg-[#777777]/60 px-[2px] leading-[15px] whitespace-pre ${l.color}`}>{l.text}</p>
      ))}
    </div>
    <div className="flex h-[26px] border border-[#55585b]">
      <div className="flex w-[52px] items-center gap-[9px] bg-linear-to-b from-[#707274] to-[#3f4143] pl-[2px]">
        <Svg w={5} h={18}>
          <path d="M1 0v18M4 0v18" stroke="#a8a8a8" strokeWidth="2" strokeDasharray="2 1" />
        </Svg>
        <button aria-label="Close command line">
          <Svg w={9}><path d="M1 1l7 7M8 1L1 8" strokeWidth="2" /></Svg>
        </button>
        <button aria-label="Customize command line">
          <Svg w={15}>
            <path d="M1 4a4 4 0 0 0 5 4l6 6 2-2-6-6a4 4 0 0 0-5-5l3 3-2 2z" fill="#8a8c8e" stroke="#d0d0d0" />
          </Svg>
        </button>
      </div>
      <div className="flex flex-1 items-center bg-[#bcbdbf] pl-[5px]">
        <Svg w={15} h={14}>
          <rect x=".5" y=".5" width="14" height="13" rx="2" fill="#d0d4d8" stroke="#5f6468" />
          <path d="M3 4l3 3-3 3M8 10.500h4" stroke="#3d4144" />
        </Svg>
        <Caret w={6} color="#555555" className="ml-1" />
        <input
          aria-label="Command"
          placeholder="Type a command"
          className="ml-[6px] min-w-0 flex-1 bg-transparent italic outline-none placeholder:text-[#77797c]"
        />
        <Svg w={7} h={4} className="mr-1"><path d="M0 4h7L3.500 0z" fill="#222" stroke="none" /></Svg>
      </div>
    </div>
  </div>
)

const Canvas = () => (
  <main className="relative flex-1 overflow-hidden bg-[#212830]">
    <Drawing />
    <p className="absolute top-[6px] left-[2px] text-[11px] leading-4 text-[#e8e8e8]">[−][Top][2D Wireframe]</p>
    <div className="absolute top-[10px] right-[10px] flex items-center gap-[9px]">
      <button aria-label="Minimize drawing"><Svg w={11}><path d="M0 8h11" stroke="#fff" strokeWidth="3" /></Svg></button>
      <button aria-label="Restore drawing">
        <Svg w={11}>
          <path d="M1.500 3.500h6v6h-6z" stroke="#fff" strokeWidth="2" />
          <path d="M4 .5h6.500V7" stroke="#fff" />
        </Svg>
      </button>
      <button aria-label="Close drawing"><Svg w={11}><path d="M1.500 1.500l7 7M8.500 1.500l-7 7" stroke="#fff" strokeWidth="2" /></Svg></button>
    </div>
    <div className="absolute top-[39px] right-[16px] flex flex-col items-center gap-5">
      <ViewCube />
      <button className="flex h-[18px] w-12 items-center gap-[7px] rounded border border-[#8d8f96] bg-[#84868d] pl-1 font-['Liberation_Sans',sans-serif] text-[11px] text-[#4b4e54]">
        WCS
        <Caret w={7} color="#c4c6cc" />
      </button>
    </div>
    <NavBar />
    <CommandLine />
    {/* Drawing text that shows through the command line */}
    <svg
      className="pointer-events-none absolute top-0 left-0 font-['Roboto_Condensed','Roboto',sans-serif] font-extralight"
      width="800"
      height="812"
      viewBox="5 181 800 812"
      fill="#ffffff"
      fontSize="30"
    >
      <text x="546" y="989" fontSize="28">SCALE</text>
      <text x="650" y="989">1</text>
      <text x="680" y="989">:</text>
      <text x="702" y="989">20</text>
    </svg>
  </main>
)

/* ---------- Status bar ---------- */
const Group = ({ children, className = '' }) => (
  <div className={`flex h-[27px] items-center border border-[#7b7b7b] bg-[#4f4f4f] ${className}`}>{children}</div>
)

const Tool = ({ name, on, className = 'w-6', children }) => (
  <button aria-label={name} className={`flex h-[23px] items-center justify-center ${on ? 'bg-[#5f8fc4]' : ''} ${className}`}>
    <Svg w={18}>{children}</Svg>
  </button>
)

const Arrow = ({ className = 'w-4' }) => (
  <button aria-label="Options" className={`flex h-full items-center justify-center ${className}`}>
    <Caret w={7} />
  </button>
)

const Person = () => <path d="M9 1l2 6 6 9-6-2-2 3-2-3-6 2 6-9z" fill={G} stroke="none" />

const StatusBar = () => (
  <footer className="flex h-[29px] shrink-0 items-start border-t border-[#5a5c5e] bg-[#363636] text-[11px] text-white">
    <div className="flex pl-2">
      <button className="flex h-[18px] w-[64px] items-center justify-center bg-linear-to-b from-[#5e6060] to-[#8a8c8c] pb-px font-bold [clip-path:path('M0_0C6_0_5_18_13_18H51C59_18_58_0_64_0Z')]">
        Model
      </button>
      <button className="-ml-px flex h-[18px] w-[68px] items-center justify-center bg-linear-to-b from-[#4c4c4c] to-[#606060] pb-px text-[#c4c0c4] [clip-path:path('M0_0C6_0_3_18_11_18H57C65_18_62_0_68_0Z')]">
        Layout1
      </button>
      <button aria-label="New layout" className="flex h-4 w-[22px] items-center justify-center rounded-tl-xl rounded-br-xl bg-[#5a5a5a]">
        <Svg w={9}><path d="M4.500 0v9M0 4.500h9" stroke="#d0d0d0" strokeWidth="2" /></Svg>
      </button>
    </div>
    <div className="ml-auto flex">
      <Group className="w-[51px] justify-center text-[12px]"><button>MODEL</button></Group>
      <Group className="w-[65px]">
        <Tool name="Grid"><path d="M2 5h14M2 9.500h14M2 14h14M5 2v15M9 2v15M13 2v15" strokeWidth="1.300" /></Tool>
        <Tool name="Snap"><path d="M3 4h13M3 9h13M3 14h13" strokeWidth="2" strokeDasharray="2 3" /></Tool>
        <Arrow />
      </Group>
      <Group className="w-[171px] pl-[2px]">
        <Tool name="Ortho" on className="w-[22px]"><path d="M2 0v16.500h16M2 11.500h5v5" stroke="#fff" strokeWidth="1.500" /></Tool>
        <Tool name="Polar" className="w-[26px]"><path d="M14 6a6.500 6.500 0 1 0 1 5M8 10l8-8M8 10h10" strokeWidth="1.300" /></Tool>
        <Arrow className="w-3" />
        <Tool name="Isodraft" className="w-[28px]">
          <path d="M2 2l14 14" stroke="#c87858" strokeWidth="1.500" />
          <path d="M9 1v16M7 9h4" stroke="#28dcd0" strokeWidth="1.500" />
        </Tool>
        <Arrow className="w-3" />
        <Tool name="Object snap tracking" on className="ml-1 w-[22px]"><path d="M15 2L2 15.500h15" stroke="#fff" strokeWidth="1.500" /></Tool>
        <Tool name="Object snap" on className="ml-[2px] w-[22px]">
          <path d="M8 4.500h8.500v12H4V8" stroke="#fff" strokeWidth="1.500" />
          <path d="M1.500 1.500h4v4h-4z" stroke="#fff" />
        </Tool>
        <Arrow />
      </Group>
      <Group className="w-[107px] pl-px">
        <Tool name="Annotation visibility" on className="w-[22px]"><Person /><circle cx="14" cy="4" r="2.500" /></Tool>
        <Tool name="Auto scale"><Person /><path d="M15 1l-3 4h4l-3 4" /></Tool>
        <Tool name="Annotation scale"><Person /></Tool>
        <button className="flex items-center gap-[5px]">1:1 <Caret w={7} /></button>
      </Group>
      <Group className="w-[46px]">
        <Tool name="Workspace" className="w-[27px]">
          <circle cx="9" cy="9" r="4.500" strokeWidth="3" />
          <circle cx="9" cy="9" r="7" strokeWidth="2.500" strokeDasharray="2.750 2.750" />
        </Tool>
        <Arrow />
      </Group>
      <Group className="w-[21px] justify-center"><Tool name="Annotation monitor" className="w-5"><path d="M9 1v16M1 9h16" strokeWidth="2" /></Tool></Group>
      <Group className="w-[27px] justify-center">
        <Tool name="Isolate objects">
          <path d="M2 1.500h6v6H2zM7.500 11l4 6h-8z" />
          <circle cx="14" cy="8" r="3" />
        </Tool>
      </Group>
      <Group className="w-[24px] justify-center">
        <Tool name="Graphics" className="w-5">
          <path d="M2 1h8l3 3v10H2z" fill="#5fb4ea" stroke="none" />
          <path d="M2 9h7v6H2z" fill="#f0c878" stroke="none" />
          <path d="M8 2v8M4 6h8" stroke="#fff" />
          <path d="M9 13l3 3 5-6" stroke="#18b028" strokeWidth="2" />
        </Tool>
      </Group>
      <Group className="w-[52px] justify-between px-1">
        <Tool name="Clean screen" className="w-5">
          <path d="M1.500 3.500h15v11h-15zM4 12l3-3M4 9v3.500h3M14 6l-3 3M14 9V5.500h-3" />
        </Tool>
        <Tool name="Customization" className="w-5"><path d="M1 3h16M1 9h16M1 15h16" strokeWidth="2" /></Tool>
      </Group>
    </div>
  </footer>
)

const App = () => (
  <div className="flex h-screen flex-col overflow-hidden bg-[#151618] font-['Open_Sans','Noto_Sans',sans-serif]">
    <div className="mr-[6px] ml-1 flex min-h-0 flex-1 flex-col overflow-hidden rounded-lg rounded-br-sm border-x border-b border-[#6b2014]">
      <TitleBar />
      <MenuTabs />
      <Ribbon />
      <FileTabs />
      <Canvas />
      <StatusBar />
    </div>
    <div className="flex h-[3px] items-end gap-[10px] overflow-hidden pl-2 text-[11px] leading-[11px] whitespace-pre text-[#c8c8c8]">
      <span>28 items</span>
      <span>|</span>
      <span>1 item selected  75,7 KB</span>
      <span>|</span>
    </div>
  </div>
)

export default App
